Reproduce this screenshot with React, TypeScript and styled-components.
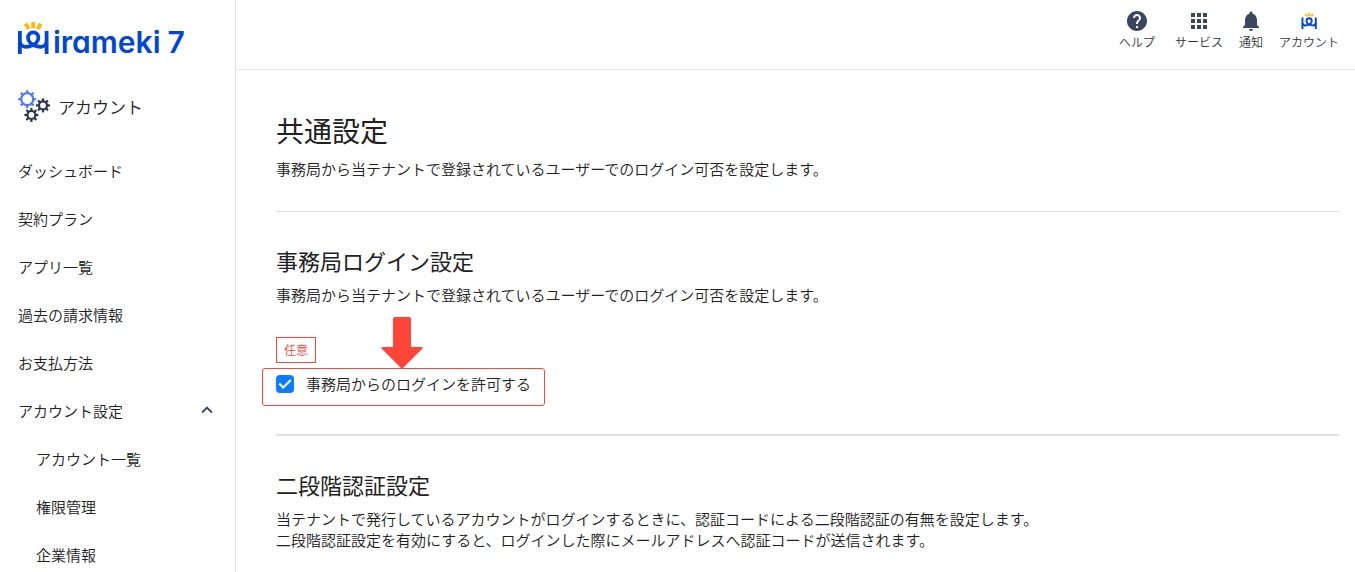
import React from "react";
import styled, { createGlobalStyle } from "styled-components";
import { MdHelp, MdApps, MdNotifications, MdKeyboardArrowUp } from "react-icons/md";

const Global = createGlobalStyle`
  * { box-sizing: border-box; }
  body {
    margin: 0;
    background: #fff;
    color: #212121;
    font-family: "Noto Sans CJK JP", "Noto Sans", sans-serif;
    font-weight: 350;
    font-size: 15px;
    line-height: 21px;
  }
  h1, h2, p, ul { margin: 0; padding: 0; font-weight: inherit; }
  ul { list-style: none; }
`;

const Page = styled.div`
  display: flex;
  height: 100vh;
  overflow: hidden;
`;

const Sidebar = styled.aside`
  flex: 0 0 236px;
  border-right: 1px solid #e4e4e4;
  overflow: hidden;
`;

const Logo = styled.a`
  display: flex;
  align-items: flex-end;
  height: 56px;
  padding-left: 17px;
  color: #0047d7;
  text-decoration: none;
  svg { display: block; margin-bottom: 2px; }
`;

const Wordmark = styled.span`
  display: flex;
  gap: 7px;
  margin-left: 4px;
  font-family: Inter, sans-serif;
  font-feature-settings: "cv11";
  font-weight: 600;
  font-size: 30px;
  line-height: 28px;
`;

const SectionTitle = styled.div`
  display: flex;
  align-items: center;
  gap: 8px;
  height: 40px;
  margin: 30px 0 21px;
  padding-left: 17px;
  font-size: 17px;
  line-height: 24px;
  span { padding-top: 2px; }
`;

const MenuLink = styled.a<{ $nested?: boolean }>`
  display: flex;
  align-items: center;
  justify-content: space-between;
  height: 48px;
  padding: 0 17px 2px ${(p) => (p.$nested ? 36 : 18)}px;
  color: inherit;
  text-decoration: none;
  svg { color: #3a4560; }
`;

const Main = styled.div`
  flex: 1;
  min-width: 0;
`;

const Header = styled.header`
  display: flex;
  justify-content: flex-end;
  gap: 16px;
  height: 70px;
  padding: 10px 16px 0 0;
  border-bottom: 1px solid #e8e8e8;
`;

const HeaderButton = styled.button`
  display: flex;
  flex-direction: column;
  align-items: center;
  gap: 1px;
  height: 42px;
  padding: 0;
  border: 0;
  background: none;
  color: #333;
  font: inherit;
  font-size: 12px;
  line-height: 18px;
  svg { color: #3a4560; }
  &:first-child { margin-right: 4px; }
`;

const IconBox = styled.span`
  display: flex;
  align-items: center;
  justify-content: center;
  height: 22px;
`;

const Content = styled.main`
  padding: 40px 16px 0 40px;
`;

const Title = styled.h1`
  && { font-weight: 400; }
  font-size: 28px;
  line-height: 40px;
  margin-bottom: 8px;
`;

const Subtitle = styled.h2`
  && { font-weight: 400; }
  font-size: 22px;
  line-height: 28px;
  margin-bottom: 10px;
`;

const Section = styled.section<{ $rule?: number }>`
  padding-bottom: 32px;
  margin-bottom: 34px;
  border-bottom: ${(p) => p.$rule ?? 0}px solid #e2e2e2;
`;

const Option = styled.div`
  position: relative;
  margin-top: 32px;
`;

const Tag = styled.span`
  display: block;
  width: 40px;
  height: 26px;
  border: 1px solid #ff4438;
  color: #ff4438;
  font-size: 12px;
  line-height: 24px;
  text-align: center;
`;

const Highlight = styled.label`
  display: flex;
  align-items: flex-start;
  gap: 12px;
  width: 283px;
  height: 38px;
  margin: 5px 0 -4px -14px;
  padding: 4px 13px;
  border: 1px solid #ff4438;
  border-radius: 3px;
`;

const Checkbox = styled.input`
  appearance: none;
  width: 18px;
  height: 18px;
  margin: 2px 0 0;
  border-radius: 4px;
  background: #0a7cff url("data:image/svg+xml,%3Csvg xmlns='http://www.w3.org/2000/svg' viewBox='0 0 18 18'%3E%3Cpath d='M3.2 8.6l4 4 7.6-7.6' fill='none' stroke='white' stroke-width='2.1'/%3E%3C/svg%3E") center / 18px 18px;
`;

const Pointer = styled.svg`
  position: absolute;
  top: -20px;
  left: 105px;
`;

const Mark = ({ size }: { size: number }) => (
  <svg width={size} height={size} viewBox="0 0 32 32" fill="none" aria-hidden="true">
    <g stroke="#ffb90b" strokeWidth="4">
      <path d="M16.2 0v6.200M8.600 1.800l3.200 5.200M23.800 1.800l-3.200 5.200" />
    </g>
    <g stroke="#0047d7" strokeWidth="3.8">
      <path d="M2.900 9v23M29.600 9v23" />
      <path d="M2.900 20.500C4 24.500 8 25.400 12 24.400C18 23 21.400 19.500 21.400 15.800C21.400 12.400 19 10.400 16.200 10.400S11 12.400 11 15.800C11 19.500 14.500 23 20.400 24.400C24.400 25.400 28.400 24.500 29.600 20.500" />
    </g>
  </svg>
);

const Gear = ({ x, y, r, color }: { x: number; y: number; r: number; color: string }) => (
  <g transform={`translate(${x} ${y})`} stroke={color} fill="none" strokeWidth="2.2">
    <circle r={r} />
    {[0, 45, 90, 135, 180, 225, 270, 315].map((a) => (
      <path key={a} d={`M0 ${-r - 0.5}V${-r - 3}`} transform={`rotate(${a})`} />
    ))}
  </g>
);

const Gears = () => (
  <svg width="33" height="34" viewBox="0 0 33 34" aria-hidden="true">
    <Gear x={10.2} y={10.2} r={6} color="#4b7bee" />
    <Gear x={26} y={16.4} r={4} color="#29344d" />
    <Gear x={14.4} y={26} r={4} color="#29344d" />
  </svg>
);

const menu = ["ダッシュボード", "契約プラン", "アプリ一覧", "過去の請求情報", "お支払方法"];
const submenu = ["アカウント一覧", "権限管理", "企業情報"];
const loginNote = "事務局から当テナントで登録されているユーザーでのログイン可否を設定します。";

export default function App() {
  return (
    <Page>
      <Global />
      <Sidebar>
        <Logo href="#">
          <Mark size={32} />
          <Wordmark><span>irameki</span><span>7</span></Wordmark>
        </Logo>
        <SectionTitle><Gears /><span>アカウント</span></SectionTitle>
        <nav>
          <ul>
            {menu.map((m) => <li key={m}><MenuLink href="#">{m}</MenuLink></li>)}
            <li>
              <MenuLink href="#">アカウント設定<MdKeyboardArrowUp size={22} /></MenuLink>
              <ul>
                {submenu.map((m) => <li key={m}><MenuLink href="#" $nested>{m}</MenuLink></li>)}
              </ul>
            </li>
          </ul>
        </nav>
      </Sidebar>
      <Main>
        <Header>
          <HeaderButton><IconBox><MdHelp size={24} /></IconBox>ヘルプ</HeaderButton>
          <HeaderButton><IconBox><MdApps size={24} /></IconBox>サービス</HeaderButton>
          <HeaderButton><IconBox><MdNotifications size={24} /></IconBox>通知</HeaderButton>
          <HeaderButton><IconBox><Mark size={16} /></IconBox>アカウント</HeaderButton>
        </Header>
        <Content>
          <Section $rule={1}>
            <Title>共通設定</Title>
            <p>{loginNote}</p>
          </Section>
          <Section $rule={2}>
            <Subtitle>事務局ログイン設定</Subtitle>
            <p>{loginNote}</p>
            <Option>
              <Tag>任意</Tag>
              <Highlight>
                <Checkbox type="checkbox" defaultChecked />
                事務局からのログインを許可する
              </Highlight>
              <Pointer width="42" height="52" viewBox="0 0 42 52" aria-hidden="true">
                <path d="M14 0h14q2 0 2 2v28h10q3 0 1 2L21 52 1 32q-2-2 1-2h10V2q0-2 2-2z" fill="#ff4438" />
              </Pointer>
            </Option>
          </Section>
          <Section>
            <Subtitle>二段階認証設定</Subtitle>
            <p>当テナントで発行しているアカウントがログインするときに、認証コードによる二段階認証の有無を設定します。</p>
            <p>二段階認証設定を有効にすると、ログインした際にメールアドレスへ認証コードが送信されます。</p>
          </Section>
        </Content>
      </Main>
    </Page>
  );
}
